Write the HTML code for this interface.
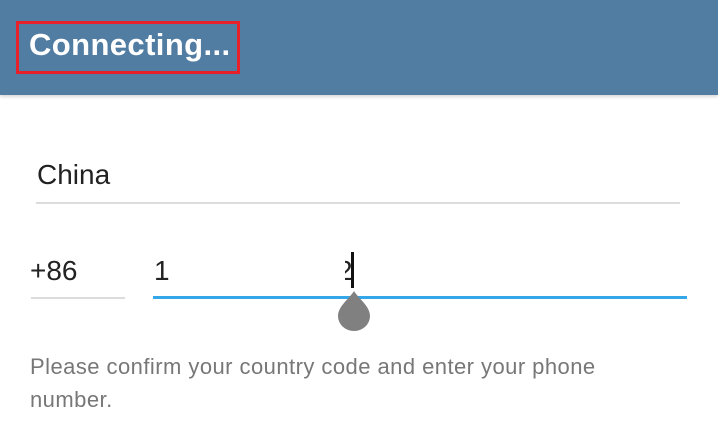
<!DOCTYPE html>
<html><head><meta charset="utf-8"><style>
body{margin:0;width:718px;height:430px;background:#fff;font-family:"Liberation Sans",sans-serif;position:relative;overflow:hidden}
.hdr{position:absolute;left:0;top:0;width:718px;height:95px;background:#527da3;box-shadow:0 2px 3px rgba(0,0,0,.15)}
.box{position:absolute;left:16px;top:21px;width:218px;height:47px;border:3px solid #e8202a}
.t{position:absolute;color:#fff;font-weight:bold;font-size:31px;left:29px;top:27px;letter-spacing:0.4px}
.a{position:absolute;color:#222;font-size:28px}
.l{position:absolute;height:2px;background:#dcdcdc}
.p{position:absolute;left:30px;color:#777;font-size:22px;line-height:33px;top:350px;width:620px;letter-spacing:0.45px}
</style></head><body>
<div class="hdr"><div class="box"></div><div class="t">Connecting...</div></div>
<div class="a" style="left:37px;top:159px">China</div>
<div class="l" style="left:36px;top:202px;width:644px"></div>
<div class="a" style="left:30px;top:255px">+86</div>
<div class="l" style="left:31px;top:297px;width:94px"></div>
<div class="a" style="left:154px;top:255px">1</div>
<div style="position:absolute;left:345px;top:255px;width:7px;overflow:hidden;height:40px"><div class="a" style="left:-8px;top:0">2</div></div>
<div style="position:absolute;left:351px;top:252px;width:3px;height:36px;background:#111"></div>
<div style="position:absolute;left:153px;top:296px;width:534px;height:3px;background:#33a7e8"></div>
<svg style="position:absolute;left:336px;top:290px" width="36" height="42"><path d="M18 1 C22 8 34 16 34 26 A16 15 0 0 1 2 26 C2 16 14 8 18 1Z" fill="#808080"/></svg>
<div class="p">Please confirm your country code and enter your phone number.</div>
</body></html>
